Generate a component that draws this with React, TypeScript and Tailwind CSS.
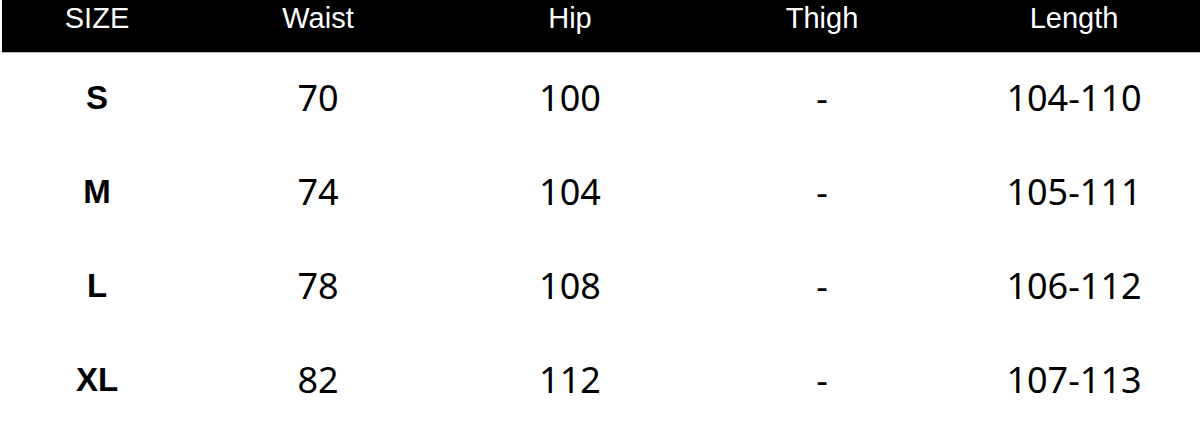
import React from 'react';

const rows = [
  { size: 'S', waist: '70', hip: '100', thigh: '-', length: '104-110' },
  { size: 'M', waist: '74', hip: '104', thigh: '-', length: '105-111' },
  { size: 'L', waist: '78', hip: '108', thigh: '-', length: '106-112' },
  { size: 'XL', waist: '82', hip: '112', thigh: '-', length: '107-113' },
];

const heads = ['SIZE', 'Waist', 'Hip', 'Thigh', 'Length'];

export default function App() {
  return (
    <div className="w-[1200px] h-[430px] bg-white overflow-hidden">
      <div className="ml-[2px] h-[53px] bg-black border-b border-[#b8b8b8] grid grid-cols-[190px_repeat(4,1fr)] font-['Liberation_Sans',Arial,sans-serif] text-white">
        {heads.map(h => (
          <div key={h} className="text-center pt-[2px] leading-[32px] text-[29px]">
            {h}
          </div>
        ))}
      </div>
      <div className="ml-[2px]">
        {rows.map(r => (
          <div key={r.size} className="h-[94px] pb-[5px] grid grid-cols-[190px_repeat(4,1fr)] items-center text-black">
            <div className="text-center font-['Liberation_Sans',Arial,sans-serif] font-bold text-[33px]">{r.size}</div>
            <div className="text-center font-['Noto_Sans',sans-serif] text-[36px]">{r.waist}</div>
            <div className="text-center font-['Noto_Sans',sans-serif] text-[36px]">{r.hip}</div>
            <div className="text-center font-['Noto_Sans',sans-serif] text-[36px]">{r.thigh}</div>
            <div className="text-center font-['Noto_Sans',sans-serif] text-[36px]">{r.length}</div>
          </div>
        ))}
      </div>
    </div>
  );
}
